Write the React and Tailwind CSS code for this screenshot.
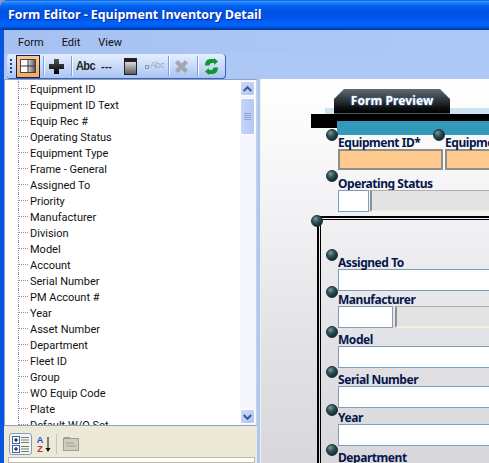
const treeItems = ["Equipment ID","Equipment ID Text","Equip Rec #","Operating Status","Equipment Type","Frame - General","Assigned To","Priority","Manufacturer","Division","Model","Account","Serial Number","PM Account #","Year","Asset Number","Department","Fleet ID","Group","WO Equip Code","Plate","Default W/O Set"];

function Sep({ className = "" }) {
  return <div className={"w-[2px] h-[20px] border-l border-[#7f9fd8] bg-white/80 " + className} />;
}

function Bullet({ className = "" }) {
  return <span className={"absolute w-[12px] h-[12px] rounded-full border border-[#1a3236] bg-[radial-gradient(circle_at_35%_28%,#7d9a9b_0,#33565a_35%,#0e272b_80%)] " + className} />;
}

function Field({ label, mt = "", children }) {
  return (
    <div className={"relative " + mt}>
      <Bullet className="left-[-12px] top-[-6px]" />
      <div className="h-[14px] text-[12px] leading-[15px] font-bold text-[#06164a] whitespace-nowrap font-['Noto_Sans'] tracking-[-0.45px]">{label}</div>
      {children}
    </div>
  );
}

function WhiteInput({ w = "w-[300px]" }) {
  return <div className={"h-[22px] bg-white border border-[#7f9db9] shrink-0 " + w} />;
}

function GrayBox() {
  return <div className="h-[22px] w-[300px] bg-[#e3e3e3] border-l-2 border-t border-l-[#909090] border-t-[#b0b0b0] border-b-2 border-b-[#f3efdf] shrink-0" />;
}

function OrangeInput({ w }) {
  return <div className={"h-[21px] bg-[#fdc98d] border-2 border-[#8f8f88] shrink-0 " + w} />;
}

function Toolbar() {
  return (
    <div className="ml-[3px] w-[219px] h-[25px] flex items-center rounded-r-[4px] rounded-l-[3px] border-r border-b border-[#3a62b8] bg-[linear-gradient(180deg,#e4eefe_0,#cfdffb_40%,#a9c4f2_100%)]">
      <div className="ml-[3px] w-[3px] h-[15px] flex flex-col justify-between">
        {[0,1,2,3].map(i => <span key={i} className="w-[2px] h-[2px] bg-[#1f3f8f]" />)}
      </div>
      <div className="ml-[3px] w-[24px] h-[23px] flex items-center justify-center border border-[#0a246a] bg-[linear-gradient(180deg,#fcc98c,#fda75a)]">
        <svg width="16" height="14" viewBox="0 0 16 14"><defs><linearGradient id="pg" x1="0" x2="1"><stop offset="0" stopColor="#ddd"/><stop offset="1" stopColor="#555"/></linearGradient></defs><rect x="0.5" y="0.5" width="15" height="13" fill="#fff" stroke="#444"/><rect x="8" y="1" width="7" height="12" fill="url(#pg)"/><path d="M1 7h14M8 1v12" stroke="#333"/></svg>
      </div>
      <Sep className="ml-[3px]" />
      <svg className="ml-[3px]" width="17" height="17" viewBox="0 0 17 17"><defs><linearGradient id="pl" x1="0" x2="0" y1="0" y2="1"><stop offset="0" stopColor="#555"/><stop offset="1" stopColor="#000"/></linearGradient></defs><path d="M6 1h5v5h5v5h-5v5H6v-5H1V6h5z" fill="url(#pl)"/></svg>
      <Sep className="ml-[6px]" />
      <span className="ml-[3px] w-[16px] text-[11px] font-bold text-[#222] font-['Liberation_Sans'] tracking-[-0.6px] scale-y-110">Abc</span>
      <span className="ml-[9px] w-[12px] text-[11px] font-bold text-[#222] font-['Liberation_Sans'] leading-none">---</span>
      <svg className="ml-[11px]" width="13" height="17" viewBox="0 0 13 17"><defs><linearGradient id="cl" x1="0" x2="0" y1="0" y2="1"><stop offset="0" stopColor="#fff"/><stop offset="1" stopColor="#555"/></linearGradient></defs><rect x="0.5" y="0.5" width="12" height="16" fill="url(#cl)" stroke="#222"/><rect x="1" y="1" width="11" height="3" fill="#222"/></svg>
      <div className="ml-[8px] w-[17px] flex items-center gap-[1px]">
        <span className="w-[4px] h-[4px] mt-[2px] border border-[#8a97b0] shrink-0" />
        <span className="whitespace-nowrap text-[9px] text-[#9aa7bd] font-['Liberation_Sans'] tracking-[-0.4px]">Abc</span>
      </div>
      <Sep className="ml-[6px]" />
      <svg className="ml-[5px]" width="13" height="13" viewBox="0 0 13 13"><path d="M3 0l3.500 3.500L10 0l3 3-3.500 3.500L13 10l-3 3-3.500-3.500L3 13l-3-3 3.500-3.500L0 3z" fill="#a3a8b0"/></svg>
      <Sep className="ml-[9px]" />
      <svg className="ml-[6px]" width="13" height="17" viewBox="0 0 13 17"><path d="M0 7.500C0 3 2.500 1 6 1h3V0l4 3.500L9 7V5H7C5.500 5 4.500 6 4.500 7.500z" fill="#0a9a2c"/><path d="M13 9.500c0 4.500-2.500 6.500-6 6.500H4v1l-4-3.500L4 10v2h2c1.500 0 2.500-1 2.500-2.500z" fill="#0a9a2c"/></svg>
    </div>
  );
}

function ScrollBtn({ up }) {
  return (
    <div className="w-[15px] h-[15px] rounded-[2px] border border-white bg-[linear-gradient(135deg,#c8d8fb,#b0c6f6)] flex items-center justify-center">
      <svg width="9" height="6" viewBox="0 0 9 6" className={up ? "" : "rotate-180"}><path d="M0.700 5L4.500 1.200 8.300 5" fill="none" stroke="#44598f" strokeWidth="2"/></svg>
    </div>
  );
}

function Tree() {
  return (
    <div className="h-[347px] border border-[#8ca2bd] border-r-[#c9d3e0] bg-white flex overflow-hidden">
      <div className="flex-1 min-w-0 overflow-hidden pt-[1px]">
        {treeItems.map(t => (
          <div key={t} className="h-4 flex items-center">
            <div className="ml-[13px] w-[10px] h-4 border-l border-dotted border-[#909090] shrink-0">
              <div className="h-2 border-b border-dotted border-[#909090]" />
            </div>
            <span className="ml-[2px] text-[11px] leading-4 text-[#111] whitespace-nowrap font-['Roboto'] translate-y-px">{t}</span>
          </div>
        ))}
      </div>
      <div className="w-[16px] shrink-0 bg-[#f6f7fd] flex flex-col justify-between py-[1px]">
        <div>
          <ScrollBtn up />
          <div className="mt-[2px] w-[15px] h-[37px] rounded-[2px] border border-white bg-[linear-gradient(90deg,#c5d5fb,#b3c8f7)] flex flex-col items-center justify-center gap-[1px]">
            {[0,1,2,3].map(i => <span key={i} className="w-[7px] h-[1px] bg-[#eef3ff] border-b border-[#8ea4da]" />)}
          </div>
        </div>
        <ScrollBtn />
      </div>
    </div>
  );
}

function LeftPanel() {
  return (
    <div className="w-[253px] shrink-0 bg-[#ece9d8] flex flex-col">
      <Tree />
      <div className="h-[31px] pl-[5px] pt-[7px] flex items-start">
        <div className="w-[23px] h-[22px] rounded-[3px] border border-[#7f9db9] bg-[#f7f7f2] flex flex-col items-center justify-center gap-[1px]">
          {[0,1].map(i => (
            <svg key={i} width="17" height="8" viewBox="0 0 17 8"><rect x="0.500" y="0.500" width="7" height="7" fill="#fff" stroke="#3b62b5"/><path d="M2 4h4M4 2v4" stroke="#000"/><path d="M9 1.500h8M9 4h8M9 6.500h8" stroke="#777"/></svg>
          ))}
        </div>
        <div className="ml-[3px] w-[10px] flex flex-col items-center font-bold text-[9px] leading-[9px] font-['Liberation_Sans'] mt-[3px]">
          <span className="text-[#2a4fbf]">A</span>
          <span className="text-[#b5322a]">Z</span>
        </div>
        <svg className="mt-[4px]" width="6" height="16" viewBox="0 0 6 16"><path d="M3 0v13" stroke="#111"/><path d="M0.500 11h5L3 15z" fill="#111"/></svg>
        <div className="ml-[5px] mt-[1px] w-[1px] h-[20px] bg-[#c9c6b4]" />
        <svg className="ml-[6px] mt-[3px]" width="16" height="15" viewBox="0 0 16 15"><rect x="0.500" y="2.500" width="15" height="12" fill="#d0cdbd" stroke="#a09e90"/><path d="M1 1.500h6v1H1zM3 7h8M3 10h10" stroke="#a09e90"/></svg>
      </div>
      <div className="ml-[4px] mr-[2px] flex-1 bg-white border border-[#bdb9a5]" />
    </div>
  );
}

function RightPanel() {
  return (
    <div className="flex-1 min-w-0 overflow-hidden ml-[3px] border-l border-[#f3efdf] bg-[linear-gradient(180deg,#ffffff_0,#f4f4f6_30%,#e2e2e6_70%,#d8d8dc_100%)]">
      <div className="pt-[10px]">
        <div className="relative z-10 ml-[73px] w-[116px] h-[25px] [clip-path:polygon(10px_0,calc(100%-10px)_0,100%_10px,100%_100%,0_100%,0_10px)] bg-[linear-gradient(180deg,#5f6b72_0,#39434a_35%,#0b0e10_80%,#000_100%)] border-b border-[#555] flex items-center justify-center text-[12px] font-bold text-white font-['Noto_Sans'] tracking-[0.1px] [text-shadow:0_0_2px_#7fb4ff] whitespace-nowrap">Form Preview</div>
        <div className="-mt-[6px] ml-[64px] h-[6px] bg-[#cde4f0]" />
        <div className="ml-[50px] h-[14px] bg-black" />
        <div className="-mt-[7px] relative ml-[76px] h-[14px] w-[300px] bg-[#3399bb]" />
        <div className="ml-[77px] flex gap-[2px] w-[400px]">
          <Field label="Equipment ID*"><OrangeInput w="w-[105px]" /></Field>
          <Field label="Equipment ID Text"><OrangeInput w="w-[200px]" /></Field>
        </div>
        <div className="ml-[77px] mt-[6px]">
          <Field label="Operating Status">
            <div className="flex gap-[1px] w-[400px]"><WhiteInput w="w-[31px]" /><GrayBox /></div>
          </Field>
        </div>
        <div className="ml-[56px] mt-[4px] w-[400px] border-t-2 border-l-2 border-black pt-[1px] pl-[1px] relative">
          <Bullet className="left-[-8px] top-[-3px]" />
          <div className="border-t border-l border-black pl-[17px] pt-[35px]">
            <Field label="Assigned To"><WhiteInput /></Field>
            <Field label="Manufacturer" mt="mt-[1px]">
              <div className="flex gap-[2px]"><WhiteInput w="w-[55px]" /><GrayBox /></div>
            </Field>
            <Field label="Model" mt="mt-[4px]"><WhiteInput /></Field>
            <Field label="Serial Number" mt="mt-[4px]"><WhiteInput /></Field>
            <Field label="Year" mt="mt-[2px]"><WhiteInput /></Field>
            <Field label="Department" mt="mt-[4px]"><WhiteInput /></Field>
          </div>
        </div>
      </div>
    </div>
  );
}

export default function App() {
  return (
    <div className="w-[489px] h-[463px] overflow-hidden flex flex-col bg-[#8a9ab8]">
      <div className="h-[30px] shrink-0 rounded-tl-[7px] flex items-center pl-[8px] text-[12.500px] tracking-[-0.08px] font-bold text-white font-['Open_Sans'] [text-shadow:1px_1px_#0f2a9a] whitespace-nowrap bg-[linear-gradient(180deg,#0a5ae0_0,#3593ff_5%,#1a7cff_10%,#0263ef_20%,#0054e3_35%,#0055eb_60%,#005df5_72%,#0066fb_80%,#0058e6_90%,#0040b8_96%,#003092_100%)]">
        Form Editor - Equipment Inventory Detail
      </div>
      <div className="flex-1 min-h-0 flex flex-col border-l-4 border-[#0a55dd] bg-[#aec8f5]">
        <div className="h-[24px] shrink-0 flex items-center pl-[14px] gap-[18px] text-[11px] text-[#111] font-['Roboto'] bg-[linear-gradient(90deg,#a6c1f1,#afc9f6)]">
          <span className="translate-y-px">Form</span><span className="translate-y-px">Edit</span><span className="translate-y-px">View</span>
        </div>
        <Toolbar />
        <div className="flex-1 min-h-0 flex">
          <LeftPanel />
          <RightPanel />
        </div>
      </div>
    </div>
  );
}
